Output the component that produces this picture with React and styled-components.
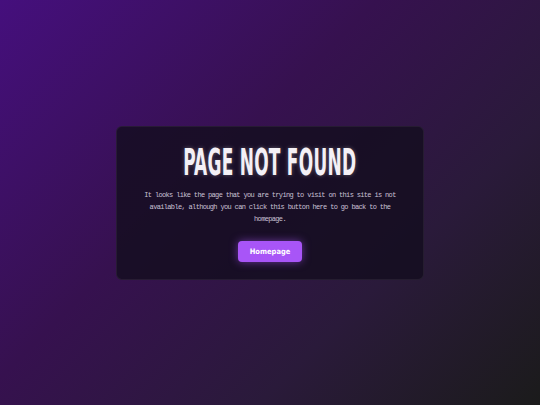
import React from "react";
import styled, { createGlobalStyle } from "styled-components";

const Global = createGlobalStyle`
  html, body { margin: 0; padding: 0; height: 100%; }
  body { font-family: "Liberation Mono", monospace; }
  #root { height: 100%; }
`;

const Page = styled.div`
  width: 540px;
  height: 405px;
  background: linear-gradient(135deg, #450f7d 0%, #36114f 40%, #2a1a3a 70%, #1b1b1b 100%);
  display: flex;
  align-items: center;
  justify-content: center;
  overflow: hidden;
`;

const Card = styled.div`
  width: 308px;
  height: 154px;
  box-sizing: border-box;
  background: rgba(20, 14, 30, 0.82);
  border: 1px solid rgba(255, 255, 255, 0.06);
  border-radius: 6px;
  display: flex;
  flex-direction: column;
  align-items: center;
  padding-top: 17px;
`;

const Title = styled.h1`
  margin: 0;
  font-family: "DejaVu Sans Condensed", "Liberation Sans Narrow", "DejaVu Sans", sans-serif;
  font-weight: 700;
  font-size: 37px;
  line-height: 37px;
  color: #f4f0f6;
  letter-spacing: 0.5px;
  transform: scaleX(0.51);
  white-space: nowrap;
  text-shadow: 0 0 6px rgba(255, 255, 255, 0.3);
`;

const Text = styled.p`
  margin: 8px 0 0;
  width: 260px;
  font-family: "Liberation Mono", "DejaVu Sans Mono", monospace;
  font-size: 7px;
  letter-spacing: -0.66px;
  line-height: 12px;
  color: #c9c0d4;
  text-align: center;
`;

const Button = styled.button`
  margin-top: 16px;
  width: 64px;
  height: 21px;
  border: none;
  border-radius: 4px;
  background: #a855f7;
  color: #ffffff;
  font-family: "DejaVu Sans Condensed", "Liberation Sans Narrow", sans-serif;
  font-weight: 700;
  font-size: 7.5px;
  box-shadow: 0 0 8px rgba(168, 85, 247, 0.55);
  cursor: pointer;
`;

export default function App() {
  return (
    <>
      <Global />
      <Page>
        <Card>
          <Title>PAGE NOT FOUND</Title>
          <Text>
            It looks like the page that you are trying to visit on this site is not
            available, although you can click this button here to go back to the
            homepage.
          </Text>
          <Button>Homepage</Button>
        </Card>
      </Page>
    </>
  );
}
